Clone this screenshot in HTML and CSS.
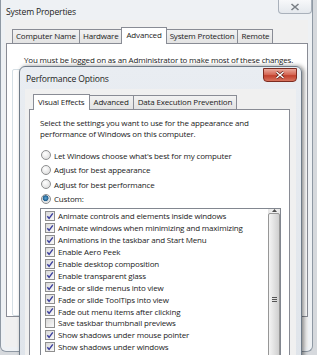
FILE: index.html
```html
<!DOCTYPE html>
<html lang="en">
<head>
    <meta charset="UTF-8">
    <meta name="viewport" content="width=device-width, initial-scale=1.0">
    <title>System Properties</title>
    <link rel="stylesheet" href="styles.css">
</head>
<body>
    <div class="sys-window">
        <div class="window-title">
            <span class="title-text">System Properties</span>
            <div class="close-btn inactive">
                <svg width="10" height="8" viewBox="0 0 10 8"><path d="M1.5 1 L8.5 7 M8.5 1 L1.5 7" stroke="#7a7f86" stroke-width="1.6"/></svg>
            </div>
        </div>
        <div class="sys-client">
            <div class="tab-strip sys-tabs">
                <div class="tab">Computer Name</div>
                <div class="tab">Hardware</div>
                <div class="tab active">Advanced</div>
                <div class="tab">System Protection</div>
                <div class="tab">Remote</div>
            </div>
            <div class="tab-panel sys-panel">
                <p class="admin-note">You must be logged on as an Administrator to make most of these changes.</p>
                <div class="group-box"></div>
            </div>
        </div>
    </div>

    <!-- Performance Options dialog on top -->
    <div class="perf-window">
        <div class="window-title">
            <span class="title-text">Performance Options</span>
            <div class="close-btn danger">
                <svg width="10" height="8" viewBox="0 0 10 8"><path d="M1.5 1 L8.5 7 M8.5 1 L1.5 7" stroke="#5a1a12" stroke-width="2.8"/><path d="M1.5 1 L8.5 7 M8.5 1 L1.5 7" stroke="#fff" stroke-width="1.5"/></svg>
            </div>
        </div>
        <div class="perf-client">
            <div class="tab-strip perf-tabs">
                <div class="tab active">Visual Effects</div>
                <div class="tab">Advanced</div>
                <div class="tab">Data Execution Prevention</div>
            </div>
            <div class="tab-panel perf-panel">
                <p class="intro">Select the settings you want to use for the appearance and<br>performance of Windows on this computer.</p>

                <div class="radio-group">
                    <div class="radio-row"><span class="radio"></span>Let Windows choose what's best for my computer</div>
                    <div class="radio-row"><span class="radio"></span>Adjust for best appearance</div>
                    <div class="radio-row"><span class="radio"></span>Adjust for best performance</div>
                    <div class="radio-row"><span class="radio checked"></span>Custom:</div>
                </div>

                <div class="effects-list">
                    <div class="effects" id="effects"></div>
                    <div class="scrollbar">
                        <div class="scroll-arrow">
                            <svg width="5" height="3" viewBox="0 0 5 3"><path d="M0 3 L2.5 0 L5 3 Z" fill="#4d4d4d"/></svg>
                        </div>
                        <div class="scroll-thumb">
                            <span class="grip"></span>
                        </div>
                    </div>
                </div>
            </div>
        </div>
    </div>

    <script>
        const effects = [
            ['Animate controls and elements inside windows', true],
            ['Animate windows when minimizing and maximizing', true],
            ['Animations in the taskbar and Start Menu', true],
            ['Enable Aero Peek', true],
            ['Enable desktop composition', true],
            ['Enable transparent glass', true],
            ['Fade or slide menus into view', true],
            ['Fade or slide ToolTips into view', true],
            ['Fade out menu items after clicking', true],
            ['Save taskbar thumbnail previews', false],
            ['Show shadows under mouse pointer', true],
            ['Show shadows under windows', true]
        ];

        const list = document.getElementById('effects');
        const tick = '<svg width="8" height="8" viewBox="0 0 8 8"><path d="M1.3 4.2 L3.1 6.3 L6.8 1.3" fill="none" stroke="#3b3f9e" stroke-width="1.4"/></svg>';

        effects.forEach(([label, on]) => {
            const row = document.createElement('div');
            row.className = 'effect';
            row.innerHTML = `<span class="checkbox">${on ? tick : ''}</span><span>${label}</span>`;
            list.appendChild(row);
        });
    </script>
</body>
</html>
```

FILE: styles.css
```css
* {
    box-sizing: border-box;
}

body {
    margin: 0;
    width: 317px;
    height: 355px;
    overflow: hidden;
    position: relative;
    background: #d6d9dd;
    font-family: "Open Sans", "Liberation Sans", sans-serif;
    font-size: 8px;
    letter-spacing: -0.17px;
    color: #1b1b1b;
}

/* window frames */
.sys-window {
    width: 313px;
    height: 352px;
    display: flex;
    flex-direction: column;
    padding: 0 4px 4px 4px;
    background: #eef1f4;
    border: 1px solid #8f99a4;
    border-top: none;
    border-radius: 0 0 6px 6px;
}

.window-title {
    height: 20px;
    display: flex;
    justify-content: space-between;
    align-items: center;
    flex-shrink: 0;
}

.title-text {
    font-size: 8.6px;
    padding: 3px 0 0 1px;
    color: #222;
}

.close-btn {
    align-self: flex-start;
    width: 34px;
    height: 14px;
    display: flex;
    align-items: center;
    justify-content: center;
    border-radius: 0 0 4px 4px;
}

.close-btn.inactive {
    margin-right: -4px;
    border: 1px solid #a9b1bb;
    border-top: none;
    background: linear-gradient(#f7f8fa, #e4e8ed);
}

.close-btn.danger {
    margin-top: 1px;
    margin-right: -1px;
    border: 1px solid #7c2b20;
    background: linear-gradient(#eaa99c, #d4624f 50%, #c2412e 55%, #d8735e);
}

.sys-client {
    flex: 1;
    display: flex;
    flex-direction: column;
    padding: 7px 0 30px 0;
    background: #f0f0f0;
}

/* tabs */
.tab-strip {
    display: flex;
    align-items: flex-end;
    flex-shrink: 0;
    position: relative;
    z-index: 1;
}

.sys-tabs {
    padding-left: 7px;
}

.tab {
    height: 14px;
    padding: 0 3px;
    margin-right: -1px;
    border: 1px solid #898c95;
    border-bottom: none;
    background: linear-gradient(#f2f2f2, #e3e3e3);
    line-height: 12px;
    white-space: nowrap;
}

.tab.active {
    height: 17px;
    padding: 0 4px;
    margin-bottom: -1px;
    background: #fff;
    line-height: 14px;
}

.tab-panel {
    background: #fff;
    border: 1px solid #898c95;
}

.sys-panel {
    flex: 1;
    margin-left: 1px;
    padding: 10px 0 0 17px;
    display: flex;
    flex-direction: column;
}

.admin-note {
    margin: 0;
    line-height: 11px;
}

.group-box {
    flex: 1;
    margin: 4px 6px 0 -12px;
    border: 1px solid #d5dfe5;
    border-radius: 2px;
}

/* performance options */
.perf-window {
    position: absolute;
    left: 19px;
    top: 66px;
    width: 283px;
    height: 300px;
    display: flex;
    flex-direction: column;
    padding: 0 5px;
    background: linear-gradient(#e9edf2, #dfe4ea);
    border: 1px solid #6f7b88;
    border-radius: 6px 6px 0 0;
    box-shadow: 2px 0 4px rgba(0, 0, 0, 0.45);
}

.perf-window .window-title {
    height: 22px;
}

.perf-window .title-text {
    padding-top: 1px;
}

.perf-client {
    flex: 1;
    display: flex;
    flex-direction: column;
    padding-top: 5px;
    background: #f0f0f0;
}

.perf-tabs {
    padding-left: 8px;
}

.perf-tabs .tab {
    padding: 0 4px;
}

.perf-tabs .tab.active {
    height: 16px;
    line-height: 13px;
}

.perf-panel {
    flex: 1;
    margin: 0 6px 0 4px;
    padding: 7px 8px 0 10px;
}

.intro {
    margin: 0;
    line-height: 11px;
}

.radio-group {
    margin-top: 9px;
}

.radio-row {
    height: 14.5px;
    display: flex;
    align-items: center;
    gap: 3px;
    white-space: nowrap;
}

.radio {
    width: 10px;
    height: 10px;
    margin-left: 1px;
    border-radius: 50%;
    border: 1px solid #8e8f90;
    background: radial-gradient(circle at 40% 35%, #ffffff, #d6d6d6);
}

.radio.checked {
    background: radial-gradient(circle at 45% 40%, #5fa6d6 0, #1f5f8e 2.6px, #d9dde0 3.2px, #f5f5f5);
}

.effects-list {
    margin-top: 2px;
    width: 241px;
    height: 160px;
    display: flex;
    border: 1px solid #828790;
    background: #fff;
}

.effects {
    flex: 1;
    padding: 1px 0 0 4px;
    overflow: hidden;
}

.effect {
    height: 11.9px;
    display: flex;
    align-items: center;
    gap: 3px;
    white-space: nowrap;
}

.checkbox {
    width: 10px;
    height: 10px;
    display: flex;
    align-items: center;
    justify-content: center;
    flex-shrink: 0;
    border: 1px solid #8f8f8f;
    background: linear-gradient(135deg, #d8d8d8, #fafafa);
}

.scrollbar {
    width: 12px;
    display: flex;
    flex-direction: column;
    background: linear-gradient(90deg, #e6e6e6, #f2f2f2 50%, #e6e6e6);
}

.scroll-arrow {
    height: 12px;
    display: flex;
    align-items: center;
    justify-content: center;
}

.scroll-thumb {
    height: 172px;
    margin-top: 1px;
    flex-shrink: 0;
    display: flex;
    align-items: center;
    justify-content: center;
    border: 1px solid #979797;
    border-radius: 2px;
    background: linear-gradient(90deg, #f4f4f4, #e4e4e4 45%, #cfcfcf);
}

.grip {
    width: 5px;
    height: 5px;
    border-top: 1px solid #555;
    border-bottom: 1px solid #555;
    background: linear-gradient(#555, #555) center / 5px 1px no-repeat;
}
```
